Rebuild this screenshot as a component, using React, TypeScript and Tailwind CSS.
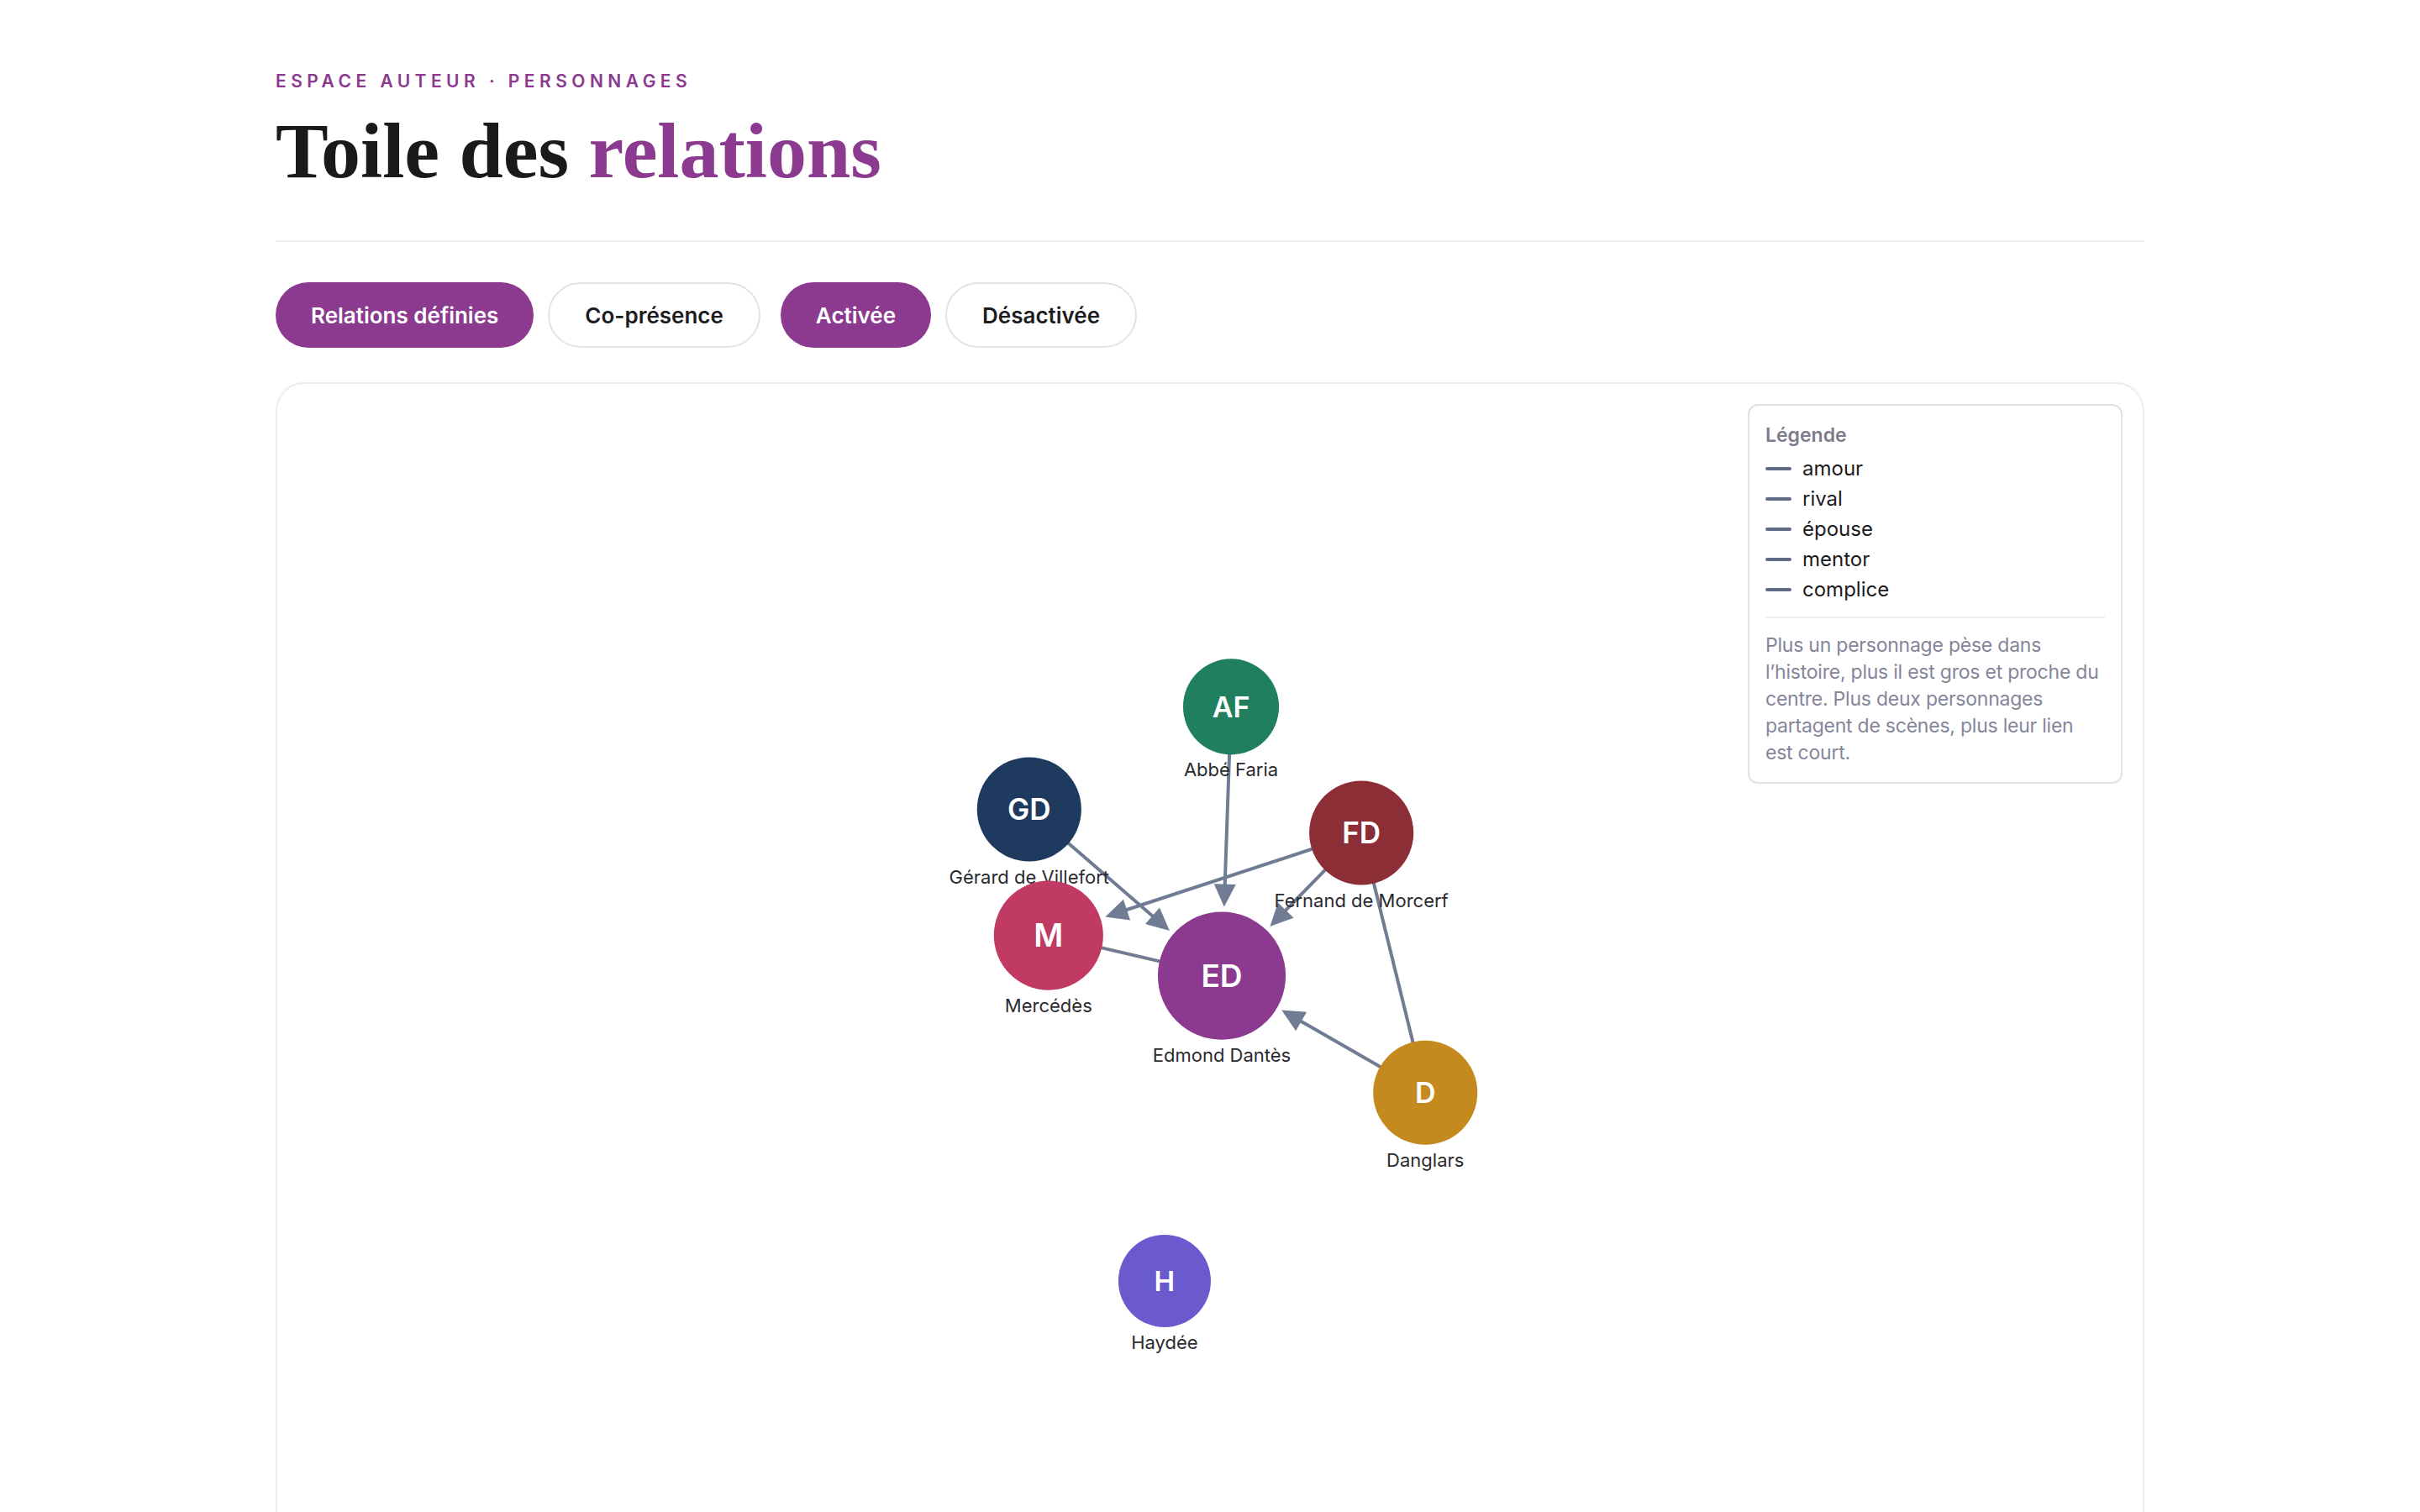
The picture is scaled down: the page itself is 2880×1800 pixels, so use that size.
import React from "react"

type Node = {
    id: string
    initials: string
    name: string
    x: number
    y: number
    r: number
    color: string
    fs: number
}

const nodes: Node[] = [
    { id: "af", initials: "AF", name: "Abbé Faria", x: 1465, y: 841, r: 57, color: "#1f7f5f", fs: 34 },
    { id: "gd", initials: "GD", name: "Gérard de Villefort", x: 1225, y: 963, r: 62, color: "#1f3a5f", fs: 35 },
    { id: "fd", initials: "FD", name: "Fernand de Morcerf", x: 1620, y: 991, r: 62, color: "#8b2e35", fs: 35 },
    { id: "m", initials: "M", name: "Mercédès", x: 1248, y: 1113, r: 65, color: "#c03a63", fs: 38 },
    { id: "ed", initials: "ED", name: "Edmond Dantès", x: 1454, y: 1161, r: 76, color: "#8b3a8f", fs: 37 },
    { id: "d", initials: "D", name: "Danglars", x: 1696, y: 1300, r: 62, color: "#c48a1f", fs: 34 },
    { id: "h", initials: "H", name: "Haydée", x: 1386, y: 1524, r: 55, color: "#6a5acd", fs: 33 },
]

// source, target, directed?
const edges: [string, string, boolean][] = [
    ["m", "ed", false],
    ["fd", "d", false],
    ["af", "ed", true],
    ["gd", "ed", true],
    ["fd", "m", true],
    ["fd", "ed", true],
    ["d", "ed", true],
]

const legend = ["amour", "rival", "épouse", "mentor", "complice"]

const byId = (id: string) => nodes.find((n) => n.id === id)!

function Graph() {
    const stroke = "#6f7c93"
    return (
        <svg
            className="absolute inset-0 w-full h-full font-['Inter',sans-serif]"
            viewBox="331 457 2218 1400"
            preserveAspectRatio="xMinYMin meet"
        >
            {edges.map(([s, t, directed]) => {
                const a = byId(s)
                const b = byId(t)
                const dx = b.x - a.x
                const dy = b.y - a.y
                const len = Math.hypot(dx, dy)
                const ux = dx / len
                const uy = dy / len
                if (!directed) {
                    return (
                        <line key={s + t} x1={a.x} y1={a.y} x2={b.x} y2={b.y} stroke={stroke} strokeWidth={4} />
                    )
                }
                const tipX = b.x - ux * (b.r + 6)
                const tipY = b.y - uy * (b.r + 6)
                const baseX = tipX - ux * 27
                const baseY = tipY - uy * 27
                const px = -uy * 13
                const py = ux * 13
                return (
                    <g key={s + t}>
                        <line x1={a.x} y1={a.y} x2={baseX + ux * 4} y2={baseY + uy * 4} stroke={stroke} strokeWidth={4} />
                        <polygon
                            points={`${tipX},${tipY} ${baseX + px},${baseY + py} ${baseX - px},${baseY - py}`}
                            fill={stroke}
                        />
                    </g>
                )
            })}
            {nodes.map((n) => (
                <g key={n.id}>
                    <circle cx={n.x} cy={n.y} r={n.r} fill={n.color} />
                    <text
                        x={n.x}
                        y={n.y + n.fs * 0.36}
                        textAnchor="middle"
                        fill="#ffffff"
                        fontSize={n.fs}
                        fontWeight={600}
                    >
                        {n.initials}
                    </text>
                    <text x={n.x} y={n.y + n.r + 26} textAnchor="middle" fill="#2b2b2f" fontSize={22}>
                        {n.name}
                    </text>
                </g>
            ))}
        </svg>
    )
}

export default function App() {
    return (
        <div className="h-[1800px] overflow-hidden bg-white font-['Inter',sans-serif] text-[#1c1c1f]">
            <div className="mx-auto w-[2224px] pt-[86px]">
                {/* Header */}
                <p className="text-[21px] leading-none font-semibold uppercase tracking-[0.26em] text-[#8b3a8f]">
                    Espace auteur · Personnages
                </p>
                <h1 className="mt-[25px] font-['Liberation_Serif',serif] text-[94px] leading-none font-bold text-[#1a1a1d]">
                    Toile des <span className="text-[#8b3a8f]">relations</span>
                </h1>

                <div className="mt-[60px] h-[2px] bg-[#ececee]" />

                {/* Filters */}
                <div className="mt-[48px] flex items-center gap-[24px]">
                    <div className="flex items-center gap-[17px]">
                        <button className="h-[78px] px-[42px] rounded-full bg-[#8b3a8f] text-white text-[26px] font-semibold">
                            Relations définies
                        </button>
                        <button className="h-[78px] px-[42px] rounded-full border-2 border-[#e3e3e6] bg-white text-[#1c1c1f] text-[26px] font-semibold">
                            Co-présence
                        </button>
                    </div>
                    <div className="flex items-center gap-[17px]">
                        <button className="h-[78px] px-[42px] rounded-full bg-[#8b3a8f] text-white text-[26px] font-semibold">
                            Activée
                        </button>
                        <button className="h-[78px] px-[42px] rounded-full border-2 border-[#e3e3e6] bg-white text-[#1c1c1f] text-[26px] font-semibold">
                            Désactivée
                        </button>
                    </div>
                </div>

                {/* Canvas */}
                <div className="relative mt-[41px] h-[1420px] rounded-[34px] border-2 border-[#ececee] bg-white">
                    <Graph />

                    <div className="absolute top-[24px] right-[24px] w-[446px] rounded-[12px] border-2 border-[#e2e2e6] bg-white p-[19px]">
                        <p className="text-[23px] leading-[32px] font-semibold text-[#7c7c8c]">Légende</p>
                        <ul className="mt-[6px]">
                            {legend.map((l) => (
                                <li key={l} className="flex items-center gap-[13px] text-[24px] leading-[36px] text-[#1c1c1f]">
                                    <span className="h-[4px] w-[31px] rounded-full bg-[#5f6b85]" />
                                    {l}
                                </li>
                            ))}
                        </ul>
                        <div className="mt-[14px] h-[2px] bg-[#ececee]" />
                        <p className="mt-[16px] text-[23px] leading-[32px] tracking-[-0.01em] text-[#85859a]">
                            Plus un personnage pèse dans l’histoire, plus il est gros et proche du centre. Plus deux
                            personnages partagent de scènes, plus leur lien est court.
                        </p>
                    </div>
                </div>
            </div>
        </div>
    )
}
